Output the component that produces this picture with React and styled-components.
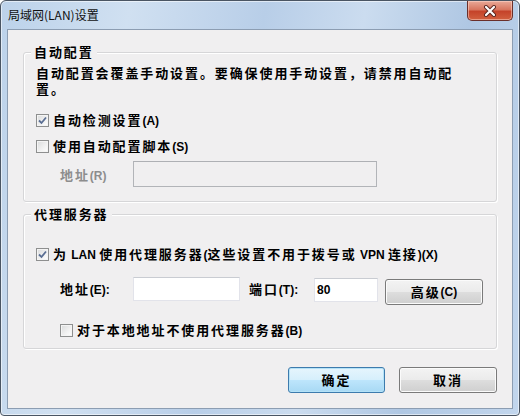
import React from "react";
import styled, { createGlobalStyle } from "styled-components";

const GlobalStyle = createGlobalStyle`
  html, body {
    margin: 0;
    padding: 0;
    background: #ffffff;
  }
  body {
    font-family: "Noto Sans CJK SC", "Noto Sans", sans-serif;
  }
`;

const Window = styled.div`
  width: 520px;
  height: 416px;
  box-sizing: border-box;
  border: 1px solid #4a5563;
  border-radius: 6px 6px 4px 4px;
  background: linear-gradient(
    100deg,
    #bcd2ea 0%,
    #d0e0f1 22%,
    #b8cee8 45%,
    #cbdcef 62%,
    #afc7e3 80%,
    #c2d6ed 100%
  );
  box-shadow: inset 0 0 0 1px rgba(255, 255, 255, 0.55);
  display: flex;
  flex-direction: column;
  overflow: hidden;
`;

const TitleBar = styled.div`
  height: 28px;
  display: flex;
  align-items: flex-start;
  padding-left: 7px;
`;

const Title = styled.div`
  margin-top: 5px;
  font-size: 12px;
  line-height: 17px;
  color: #111;
`;

const CloseButton = styled.div`
  margin-left: auto;
  margin-right: 6px;
  width: 46px;
  height: 20px;
  box-sizing: border-box;
  border: 1px solid #6a2f2a;
  border-top: none;
  border-radius: 0 0 5px 5px;
  background: linear-gradient(#e9a998 0%, #d8765f 45%, #c5432a 55%, #d2603f 100%);
  box-shadow: inset 0 0 0 1px rgba(255, 220, 210, 0.5);
  display: flex;
  align-items: center;
  justify-content: center;
`;

const Client = styled.div`
  flex: 1;
  margin: 0 6px 6px;
  border: 1px solid #8c9db2;
  background: #f0eff0;
  padding: 0 15px;
  display: flex;
  flex-direction: column;
  font-size: 13px;
  line-height: 16px;
  font-weight: 700;
  letter-spacing: 1.9px;
  color: #000;
`;

const Group = styled.div`
  position: relative;
  box-sizing: border-box;
  height: ${(p) => p.$h}px;
  margin-top: ${(p) => p.$top}px;
  border: 1px solid #d6d6d8;
  border-radius: 3px;
  box-shadow: inset 1px 1px 0 #fff, 1px 1px 0 #fff;
  padding: ${(p) => p.$pad}px 0 0 12px;
  display: flex;
  flex-direction: column;
`;

const Legend = styled.div`
  position: absolute;
  top: -9px;
  left: 7px;
  padding: 0 3px;
  background: #f0eff0;
  line-height: 16px;
`;

const Desc = styled.div`
  white-space: nowrap;
  line-height: 16px;
`;

const CheckRow = styled.label`
  display: flex;
  align-items: center;
  height: 16px;
  margin-top: ${(p) => p.$top || 0}px;
  margin-left: ${(p) => p.$indent || 0}px;
  gap: 4px;
`;

const Box = styled.span`
  width: 13px;
  height: 13px;
  box-sizing: border-box;
  border: 1px solid #8e8f8f;
  background: linear-gradient(135deg, #d9dadb 0%, #f2f2f2 60%, #ffffff 100%);
  box-shadow: inset 0 0 0 1px #f4f4f4;
  display: flex;
  align-items: center;
  justify-content: center;
  flex-shrink: 0;
`;

const FieldRow = styled.div`
  display: flex;
  align-items: flex-start;
  margin-top: ${(p) => p.$top}px;
  margin-left: 24px;
`;

const FieldLabel = styled.span`
  width: ${(p) => p.$w}px;
  line-height: 16px;
  margin-top: ${(p) => p.$dy}px;
  color: ${(p) => (p.$disabled ? "#8d8d8d" : "#000")};
  flex-shrink: 0;
  white-space: nowrap;
`;

const TextBox = styled.div`
  box-sizing: border-box;
  width: ${(p) => p.$w}px;
  height: ${(p) => p.$h}px;
  margin-top: ${(p) => p.$dy || 0}px;
  margin-right: ${(p) => p.$mr || 0}px;
  border: 1px solid ${(p) => (p.$disabled ? "#b2b4b8" : "#e2e3ea")};
  border-top-color: ${(p) => (p.$disabled ? "#aeb0b4" : "#c9ccd2")};
  background: ${(p) => (p.$disabled ? "#f0eff0" : "#ffffff")};
  padding: 3px 2px 0;
  line-height: 16px;
  letter-spacing: 0;
  font-family: "Liberation Sans", sans-serif;
  font-size: 12px;
`;

const Button = styled.div`
  box-sizing: border-box;
  width: ${(p) => p.$w}px;
  height: 26px;
  margin-top: ${(p) => p.$dy || 0}px;
  border: 1px solid ${(p) => (p.$primary ? "#3d7bad" : "#7a7a7a")};
  border-radius: 3px;
  background: ${(p) =>
    p.$primary
      ? "linear-gradient(#e6f5fd 0%, #d6effc 48%, #bde5fc 52%, #a8d9f4 100%)"
      : "linear-gradient(#f3f3f3 0%, #ebebeb 48%, #dddddd 52%, #cfcfcf 100%)"};
  box-shadow: inset 0 0 0 1px ${(p) => (p.$primary ? "#b4e2f7" : "#fbfbfb")};
  display: flex;
  align-items: center;
  justify-content: center;
  line-height: 16px;
`;

const Footer = styled.div`
  display: flex;
  justify-content: flex-end;
  gap: 14px;
  margin-top: 18px;
`;

const Lat = styled.span`
  font-family: "Liberation Sans", sans-serif;
  font-size: 12px;
  letter-spacing: 0;
`;

function Txt({ children }) {
  return String(children)
    .split(/([\x00-\x7f]+)/)
    .filter(Boolean)
    .map((s, i) =>
      /^[\x00-\x7f]+$/.test(s) ? <Lat key={i}>{s}</Lat> : <React.Fragment key={i}>{s}</React.Fragment>
    );
}

function CheckBox({ checked }) {
  return (
    <Box>
      {checked && (
        <svg width="9" height="9" viewBox="0 0 9 9">
          <path d="M1 4.5 L3.5 7 L8 1.5" fill="none" stroke="#5a6e93" strokeWidth="1.8" />
        </svg>
      )}
    </Box>
  );
}

export default function App() {
  return (
    <>
      <GlobalStyle />
      <Window>
        <TitleBar>
          <Title>局域网(LAN)设置</Title>
          <CloseButton>
            <svg width="14" height="12" viewBox="0 0 14 12">
              <path d="M3 2 L11 10 M11 2 L3 10" stroke="#5a2620" strokeWidth="4" strokeLinecap="round" />
              <path d="M3 2 L11 10 M11 2 L3 10" stroke="#ffffff" strokeWidth="2.2" strokeLinecap="round" />
            </svg>
          </CloseButton>
        </TitleBar>
        <Client>
          <Group $h={150} $top={22} $pad={12}>
            <Legend>自动配置</Legend>
            <Desc>
              自动配置会覆盖手动设置。要确保使用手动设置，请禁用自动配
              <br />
              置。
            </Desc>
            <CheckRow $top={15}>
              <CheckBox checked />
              <span><Txt>自动检测设置(A)</Txt></span>
            </CheckRow>
            <CheckRow $top={10}>
              <CheckBox />
              <span><Txt>使用自动配置脚本(S)</Txt></span>
            </CheckRow>
            <FieldRow $top={7}>
              <FieldLabel $w={73} $dy={6} $disabled><Txt>地址(R)</Txt></FieldLabel>
              <TextBox $w={244} $h={26} $disabled />
            </FieldRow>
          </Group>
          <Group $h={135} $top={12} $pad={31}>
            <Legend>代理服务器</Legend>
            <CheckRow>
              <CheckBox checked />
              <span><Txt>为 LAN 使用代理服务器(这些设置不用于拨号或 VPN 连接)(X)</Txt></span>
            </CheckRow>
            <FieldRow $top={15}>
              <FieldLabel $w={73} $dy={4}><Txt>地址(E):</Txt></FieldLabel>
              <TextBox $w={107} $h={24} $mr={9} />
              <FieldLabel $w={65} $dy={4}><Txt>端口(T):</Txt></FieldLabel>
              <TextBox $w={64} $h={24} $dy={1} $mr={7}>80</TextBox>
              <Button $w={98} $dy={2}><Txt>高级(C)</Txt></Button>
            </FieldRow>
            <CheckRow $top={17} $indent={24}>
              <CheckBox />
              <span><Txt>对于本地地址不使用代理服务器(B)</Txt></span>
            </CheckRow>
          </Group>
          <Footer>
            <Button $w={97} $primary>确定</Button>
            <Button $w={98}>取消</Button>
          </Footer>
        </Client>
      </Window>
    </>
  );
}
